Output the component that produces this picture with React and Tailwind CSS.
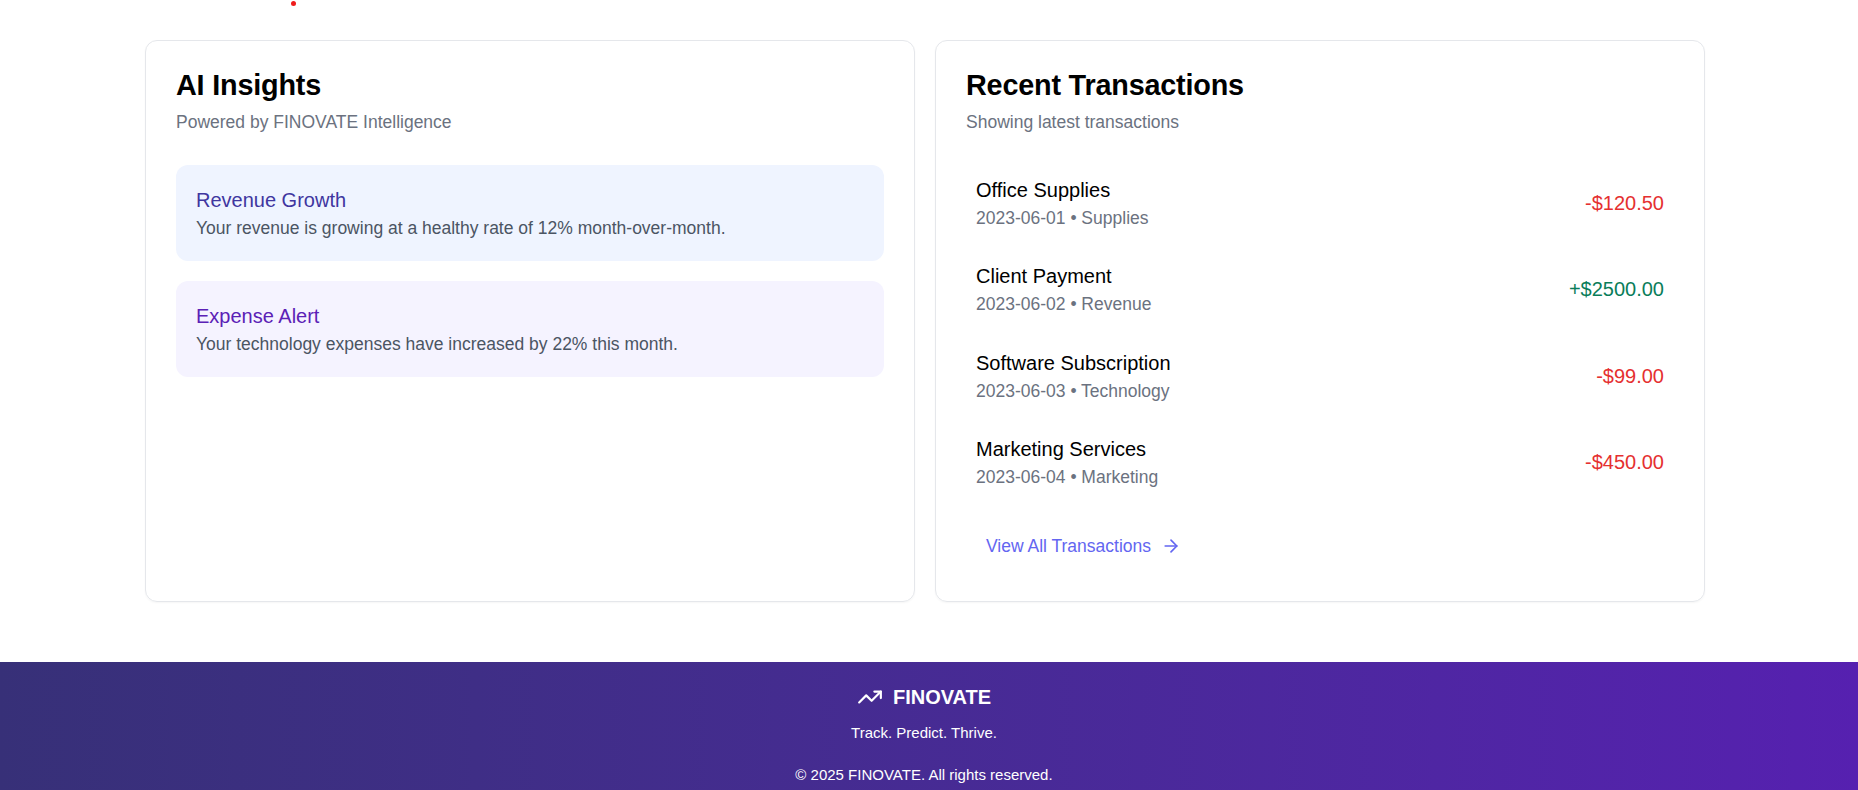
import React from 'react';
import { ArrowRight, TrendingUp } from 'lucide-react';

const insights = [
  {
    title: 'Revenue Growth',
    text: 'Your revenue is growing at a healthy rate of 12% month-over-month.',
    box: 'bg-[#eff4ff]',
    heading: 'text-[#40369f]',
  },
  {
    title: 'Expense Alert',
    text: 'Your technology expenses have increased by 22% this month.',
    box: 'bg-[#f5f3ff]',
    heading: 'text-[#5b21b6]',
  },
];

const transactions = [
  { name: 'Office Supplies', meta: '2023-06-01 • Supplies', amount: '-$120.50', income: false },
  { name: 'Client Payment', meta: '2023-06-02 • Revenue', amount: '+$2500.00', income: true },
  { name: 'Software Subscription', meta: '2023-06-03 • Technology', amount: '-$99.00', income: false },
  { name: 'Marketing Services', meta: '2023-06-04 • Marketing', amount: '-$450.00', income: false },
];

function App() {
  return (
    <div className="h-[790px] overflow-hidden bg-white font-['Liberation_Sans',Arial,sans-serif] text-black">
      <div className="h-10 pl-[291px]">
        <div className="size-[5px] translate-y-px rounded-full bg-[#ef1c1c]" />
      </div>

      <div className="pr-2">
        <main className="mx-auto grid w-[1560px] grid-cols-2 gap-5">
          <section className="h-[562px] rounded-xl border border-[#e5e7eb] p-7.5 pt-[26px] shadow-[0_1px_2px_rgba(0,0,0,0.04)]">
            <h2 className="text-[28.8px] leading-9 font-bold tracking-[-0.2px]">AI Insights</h2>
            <p className="mt-[7px] text-[17.5px] leading-6 text-[#6b7280]">Powered by FINOVATE Intelligence</p>
            <div className="mt-[31px] flex flex-col gap-5">
              {insights.map((item) => (
                <div key={item.title} className={`rounded-xl px-5 py-[21px] ${item.box}`}>
                  <h3 className={`mb-0.5 text-xl leading-7 ${item.heading}`}>{item.title}</h3>
                  <p className="text-[17.5px] leading-6 text-[#4b5563]">{item.text}</p>
                </div>
              ))}
            </div>
          </section>

          <section className="h-[562px] rounded-xl border border-[#e5e7eb] p-7.5 pt-[26px] shadow-[0_1px_2px_rgba(0,0,0,0.04)]">
            <h2 className="text-[28.8px] leading-9 font-bold tracking-[-0.2px]">Recent Transactions</h2>
            <p className="mt-[7px] text-[17.5px] leading-6 text-[#6b7280]">Showing latest transactions</p>
            <div className="mt-[25.5px] flex flex-col">
              {transactions.map((tx) => (
                <div key={tx.name} className="flex items-center justify-between px-2.5 py-[16.25px]">
                  <div>
                    <p className="mb-0.5 text-xl leading-7">{tx.name}</p>
                    <p className="text-[17.5px] leading-6 text-[#6b7280]">{tx.meta}</p>
                  </div>
                  <span className={`text-xl ${tx.income ? 'text-[#0a7d5a]' : 'text-[#e53030]'}`}>{tx.amount}</span>
                </div>
              ))}
            </div>
            <a href="#" className="mt-[27px] ml-5 flex items-center gap-2.5 text-[17.5px] text-[#6366f1]">
              View All Transactions
              <ArrowRight className="size-5" />
            </a>
          </section>
        </main>
      </div>

      <footer className="mt-[60px] h-[190px] bg-gradient-to-r from-[#373078] to-[#5620b0] pt-[21px] text-center text-white">
        <div className="flex items-center justify-center gap-2.5 pr-2.5">
          <TrendingUp className="size-[26px]" />
          <span className="text-xl font-bold">FINOVATE</span>
        </div>
        <p className="mt-[11px] pr-2.5 text-[15px]">Track. Predict. Thrive.</p>
        <p className="mt-[19px] pr-2.5 text-[15px]">© 2025 FINOVATE. All rights reserved.</p>
      </footer>
    </div>
  );
}

export default App;
